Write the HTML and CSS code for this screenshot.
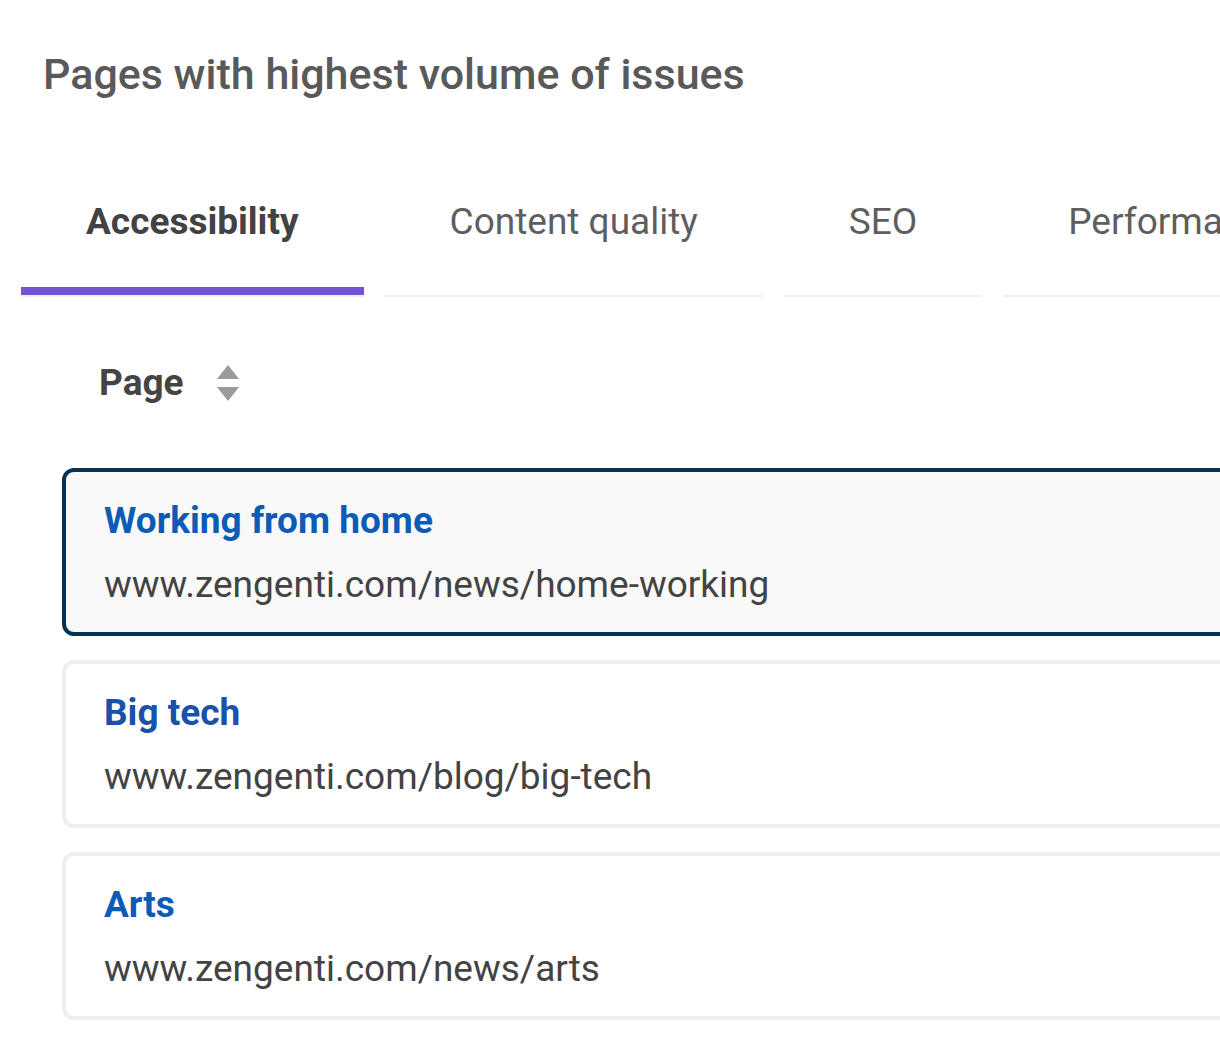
FILE: index.html
```html
<!DOCTYPE html>
<html>
<head>
<meta http-equiv="Content-Type" content="text/html; charset=utf-8"/>
<title>Pages with highest volume of issues</title>
<link rel="stylesheet" href="styles.css">
</head>
<body>

<h1 class="title">Pages with highest volume of issues</h1>

<ul class="tabs">
  <li class="tab active">Accessibility</li>
  <li class="tab">Content quality</li>
  <li class="tab">SEO</li>
  <li class="tab">Performance</li>
</ul>

<div class="col-head">
  <span>Page</span>
  <svg class="sort" width="22" height="36" viewBox="0 0 22 36">
    <polygon points="11,0 22,14 0,14" fill="#9a9a9a"/>
    <polygon points="0,22 22,22 11,36" fill="#9a9a9a"/>
  </svg>
</div>

<div class="cards">
  <a class="card selected" href="#">
    <span class="card-title">Working from home</span>
    <span class="card-url">www.zengenti.com/news/home-working</span>
  </a>
  <a class="card" href="#">
    <span class="card-title visited">Big tech</span>
    <span class="card-url">www.zengenti.com/blog/big-tech</span>
  </a>
  <a class="card" href="#">
    <span class="card-title">Arts</span>
    <span class="card-url">www.zengenti.com/news/arts</span>
  </a>
</div>

</body>
</html>
```

FILE: styles.css
```css
body {
  margin: 0;
  background-color: white;
  font-family: Roboto, "Liberation Sans", sans-serif;
  overflow: hidden;
}

.title {
  margin: 49px 0 0 43px;
  font-size: 43px;
  line-height: 50px;
  font-weight: 500;
  color: #595959;
}

.tabs {
  display: flex;
  gap: 21px;
  list-style: none;
  margin: 101px 0 0 21px;
  padding: 0;
  white-space: nowrap;
}

.tab {
  padding: 0 65px 51px;
  font-size: 37px;
  line-height: 44px;
  color: #5e5e5e;
  border-bottom: 2px solid #efefef;
}

.tab.active {
  font-weight: 700;
  color: #424242;
  box-shadow: inset 0 -8px 0 #7551d9;
}

.col-head {
  display: flex;
  align-items: center;
  gap: 33px;
  margin: 64px 0 0 99px;
  font-size: 37px;
  line-height: 44px;
  font-weight: 700;
  color: #444;
}

.cards {
  display: flex;
  flex-direction: column;
  gap: 24px;
  margin: 63px -60px 0 62px;
}

.card {
  display: flex;
  flex-direction: column;
  gap: 20px;
  padding: 27px 38px 25px;
  border: 4px solid #eeeeee;
  border-radius: 12px;
  background-color: white;
  text-decoration: none;
  font-size: 37px;
  line-height: 44px;
}

.card.selected {
  border-color: #073251;
  background-color: #f9f9f9;
}

.card-title {
  font-weight: 700;
  color: #0b5bb7;
}

.card-title.visited {
  color: #1a51a9;
}

.card-url {
  color: #434343;
}
```
